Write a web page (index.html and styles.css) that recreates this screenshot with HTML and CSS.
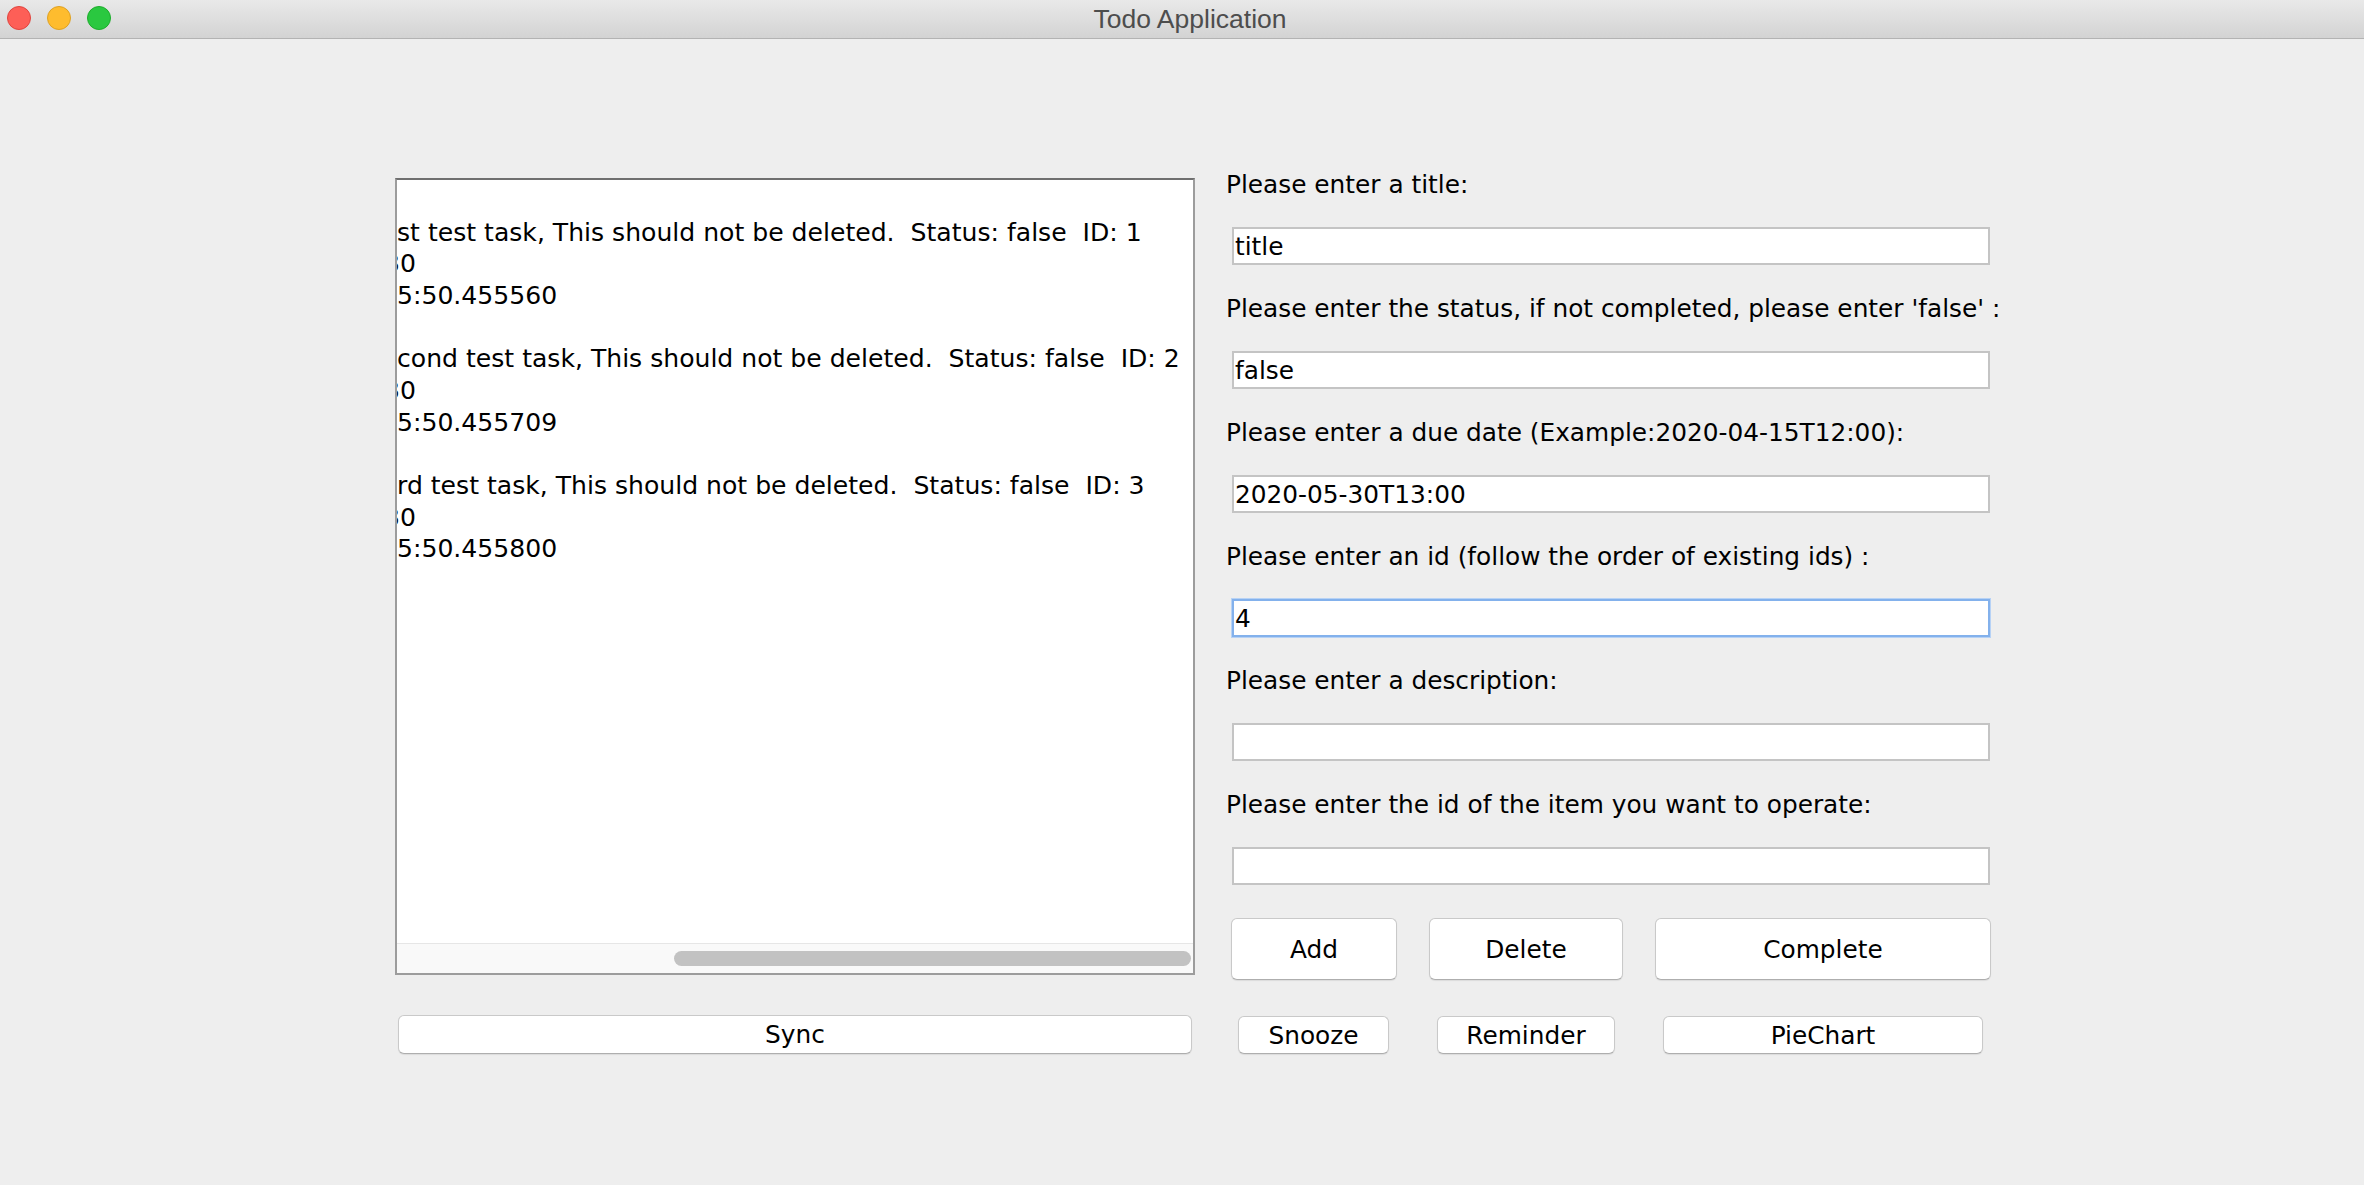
FILE: index.html
```html
<!DOCTYPE html>
<html lang="en">
<head>
<meta charset="utf-8">
<title>Todo Application</title>
<link rel="stylesheet" href="styles.css">
</head>
<body>
<div class="window">
  <header class="titlebar">
    <div class="lights">
      <span class="light red"></span>
      <span class="light yellow"></span>
      <span class="light green"></span>
    </div>
    <div class="title">Todo Application</div>
    <div class="spacer"></div>
  </header>

  <main class="main">
    <section class="list">
      <div class="list-text">
        <div class="line"> </div>
        <div class="line">st test task, This should not be deleted.  Status: false  ID: 1</div>
        <div class="line"><span class="cut">3</span>0</div>
        <div class="line">5:50.455560</div>
        <div class="line"> </div>
        <div class="line">cond test task, This should not be deleted.  Status: false  ID: 2</div>
        <div class="line"><span class="cut">3</span>0</div>
        <div class="line">5:50.455709</div>
        <div class="line"> </div>
        <div class="line">rd test task, This should not be deleted.  Status: false  ID: 3</div>
        <div class="line"><span class="cut">3</span>0</div>
        <div class="line">5:50.455800</div>
      </div>
      <div class="hscroll"><div class="thumb"></div></div>
    </section>

    <section class="form">
      <label class="label">Please enter a title:</label>
      <input class="field" type="text" value="title">
      <label class="label">Please enter the status, if not completed, please enter 'false' :</label>
      <input class="field" type="text" value="false">
      <label class="label">Please enter a due date (Example:2020-04-15T12:00):</label>
      <input class="field" type="text" value="2020-05-30T13:00">
      <label class="label">Please enter an id (follow the order of existing ids) :</label>
      <input class="field focus" type="text" value="4">
      <label class="label">Please enter a description:</label>
      <input class="field" type="text" value="">
      <label class="label">Please enter the id of the item you want to operate:</label>
      <input class="field" type="text" value="">
      <div class="actions">
        <button class="btn big add">Add</button>
        <button class="btn big delete">Delete</button>
        <button class="btn big complete">Complete</button>
      </div>
    </section>

    <div class="sync-wrap">
      <button class="btn sync">Sync</button>
    </div>

    <div class="actions2">
      <button class="btn small snooze">Snooze</button>
      <button class="btn small reminder">Reminder</button>
      <button class="btn small piechart">PieChart</button>
    </div>
  </main>
</div>
</body>
</html>
```

FILE: styles.css
```css
* {
  box-sizing: border-box;
}

html, body {
  margin: 0;
  padding: 0;
}

body {
  background: #eeeeee;
  width: 2364px;
  height: 1185px;
  overflow: hidden;
  font-family: "DejaVu Sans", "Lucida Grande", sans-serif;
  font-size: 24.8px;
  color: #000;
}

.window {
  width: 2364px;
  height: 1185px;
  background: #eeeeee;
}

/* ---------- title bar ---------- */
.titlebar {
  height: 39px;
  display: grid;
  grid-template-columns: 1fr auto 1fr;
  align-items: start;
  background: linear-gradient(#e9e9e9, #d3d3d3);
  border-bottom: 1px solid #b3b3b3;
}

.lights {
  display: flex;
  gap: 16px;
  padding: 6px 0 0 7px;
}

.light {
  width: 24px;
  height: 24px;
  border-radius: 50%;
  display: block;
}

.red {
  background: #fd5f57;
  border: 1px solid #e0443e;
}

.yellow {
  background: #febc2e;
  border: 1px solid #dea123;
}

.green {
  background: #2ac840;
  border: 1px solid #1dad2b;
}

.title {
  font-family: "Liberation Sans", Arial, sans-serif;
  font-size: 26.5px;
  line-height: 38px;
  color: #4d4d4d;
  margin-left: 16px;
}

/* ---------- main layout ---------- */
.main {
  display: grid;
  grid-template-columns: 800px 780px;
  column-gap: 31px;
  row-gap: 35px;
  padding: 129px 0 0 395px;
  align-items: start;
}

/* ---------- list (text area) ---------- */
.list {
  margin-top: 10px;
  height: 797px;
  background: #fff;
  border: 2px solid #9c9c9c;
  border-top-color: #6f6f6f;
  display: flex;
  flex-direction: column;
  overflow: hidden;
}

.list-text {
  flex: 1;
  padding-top: 5px;
  overflow: hidden;
  font-size: 25.1px;
}

.line {
  white-space: pre;
  line-height: 31.66px;
  height: 31.66px;
}

.cut {
  display: inline-block;
  margin-left: -13px;
}

.hscroll {
  height: 30px;
  background: #f9f9f9;
  border-top: 1px solid #e6e6e6;
  padding: 7px 2px 0 277px;
}

.thumb {
  height: 15px;
  border-radius: 8px;
  background: #c2c2c2;
}

/* ---------- form ---------- */
.form {
  display: flex;
  flex-direction: column;
  align-items: flex-start;
}

.label {
  display: block;
  line-height: 32px;
  height: 33px;
  padding-top: 1px;
  white-space: nowrap;
}

.field {
  -webkit-appearance: none;
  appearance: none;
  display: block;
  margin: 26px 0 27px 6px;
  width: 758px;
  height: 38px;
  padding: 0 1px;
  border: 2px solid #c4c4c4;
  border-radius: 0;
  background: #fff;
  font-family: inherit;
  font-size: 24.8px;
  line-height: 34px;
  color: #000;
  outline: none;
}

.field.focus {
  border-color: #83b1ec;
  box-shadow: 0 0 0 1px #b7d2f5;
}

.actions {
  display: flex;
  gap: 32px;
  margin: 6px 0 0 5px;
}

/* ---------- buttons ---------- */
.btn {
  -webkit-appearance: none;
  appearance: none;
  font-family: inherit;
  font-size: 24.8px;
  color: #000;
  background: #fff;
  border: 1px solid #c9c9c9;
  border-bottom-color: #aeaeae;
  border-radius: 6px;
  box-shadow: 0 1px 1px rgba(0, 0, 0, 0.08);
  padding: 0;
  margin: 0;
}

.btn.big {
  height: 62px;
}

.add {
  width: 166px;
}

.delete {
  width: 194px;
}

.complete {
  width: 336px;
}

.sync-wrap {
  padding: 0 3px;
}

.sync {
  width: 100%;
  height: 39px;
}

.actions2 {
  display: flex;
  gap: 48px;
  margin: 1px 0 0 12px;
}

.btn.small {
  height: 38px;
}

.snooze {
  width: 151px;
}

.reminder {
  width: 178px;
}

.piechart {
  width: 320px;
}
```
